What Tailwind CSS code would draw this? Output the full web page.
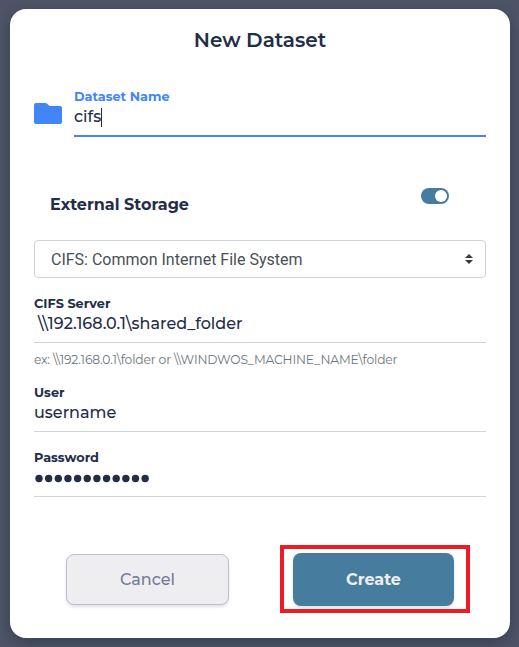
<!DOCTYPE html>
<html lang="en">
<head>
<meta charset="utf-8">
<title>New Dataset</title>
<script src="https://cdn.jsdelivr.net/npm/@tailwindcss/browser@4"></script>
</head>
<body class="w-[519px] h-[647px] overflow-hidden bg-[#4f5568] px-[10px] pt-[9px] font-[Montserrat,Inter,sans-serif] text-[#232d46]">
<main class="flex h-[629px] w-[500px] flex-col rounded-2xl bg-white px-6 shadow-[0_4px_16px_rgba(30,45,55,0.55)]">
  <h1 class="mt-4 h-[30px] text-center text-[20px] leading-[30px] font-semibold">New Dataset</h1>

  <div class="mt-[33px] flex h-[49px]">
    <svg class="mt-[15px] h-[21px] w-7 shrink-0" viewBox="0 0 28 21" fill="#4285f8"><path d="M2 0h9.500q1 0 1.700.8L15.500 3H26q2 0 2 2v14q0 2-2 2H2q-2 0-2-2V2q0-2 2-2z"/></svg>
    <div class="ml-3 flex-1 border-b-2 border-[#4285f8]">
      <div class="h-[19px] text-[12.8px] leading-[17px] font-bold text-[#4285f8]">Dataset Name</div>
      <div class="flex h-5 items-center text-[16px] leading-5 font-medium"><span>cifs</span><i class="h-[19px] w-px bg-[#232d46]"></i></div>
    </div>
  </div>

  <div class="mt-[51px] flex h-[34px] justify-between pr-[37px] pl-4">
    <h2 class="mt-[5px] text-[16px] leading-6 font-bold">External Storage</h2>
    <div class="flex h-4 w-7 items-center justify-end rounded-full bg-[#467c9d] pr-0.5"><i class="h-3 w-3 rounded-full bg-white"></i></div>
  </div>

  <div class="mt-[18px] flex h-[38px] items-center justify-between rounded border border-[#ced4da] pr-3 pl-4 font-[Roboto] text-[16px] text-[#495057]">
    <span class="pt-0.5">CIFS: Common Internet File System</span>
    <svg class="h-[10px] w-2" viewBox="0 0 8 10" fill="#343a40"><path d="M4 0 0 4h8zM0 6h8l-4 4z"/></svg>
  </div>

  <div class="mt-4 h-[49px] border-b border-[#ced4da]">
    <div class="h-[19px] text-[12.8px] leading-[19px] font-bold">CIFS Server</div>
    <div class="h-5 pl-1 text-[16px] leading-[22px] font-medium">\\192.168.0.1\shared_folder</div>
  </div>
  <div class="mt-[7px] h-[19px] text-[12.3px] leading-[19px] tracking-[-0.16px] text-[#6c757d]">ex: \\192.168.0.1\folder or \\WINDWOS_MACHINE_NAME\folder</div>

  <div class="mt-[14px] h-[49px] border-b border-[#ced4da]">
    <div class="h-[19px] text-[12.8px] leading-[19px] font-bold">User</div>
    <div class="h-5 text-[16px] leading-[22px] font-medium">username</div>
  </div>

  <div class="mt-4 h-[49px] border-b border-[#ced4da]">
    <div class="h-[19px] text-[12.8px] leading-[19px] font-bold">Password</div>
    <svg class="mt-[7px] h-[9px] w-[116px]" viewBox="0 0 116 9" fill="#232d46"><circle cx="5" cy="4.500" r="3.700"/><circle cx="14.650" cy="4.500" r="3.700"/><circle cx="24.300" cy="4.500" r="3.700"/><circle cx="33.950" cy="4.500" r="3.700"/><circle cx="43.600" cy="4.500" r="3.700"/><circle cx="53.250" cy="4.500" r="3.700"/><circle cx="62.900" cy="4.500" r="3.700"/><circle cx="72.550" cy="4.500" r="3.700"/><circle cx="82.200" cy="4.500" r="3.700"/><circle cx="91.850" cy="4.500" r="3.700"/><circle cx="101.500" cy="4.500" r="3.700"/><circle cx="111.150" cy="4.500" r="3.700"/></svg>
  </div>

  <div class="mt-12 flex items-center justify-between pr-4 pl-8">
    <button class="h-[51px] w-[163px] rounded-lg border border-[#b9c0d4] bg-[#eeeef0] pt-px text-[16px] font-medium text-[#717c9b] shadow-[0_2px_3px_rgba(0,0,0,0.12)]">Cancel</button>
    <div class="flex h-[68px] w-[190px] border-4 border-[#ed1c24] pt-1 pl-[9px]">
      <button class="h-[53px] w-[161px] rounded-lg bg-[#467c9d] text-[16px] font-bold text-[#eeeef0] shadow-[0_2px_3px_rgba(0,0,0,0.12)]">Create</button>
    </div>
  </div>
</main>
</body>
</html>
